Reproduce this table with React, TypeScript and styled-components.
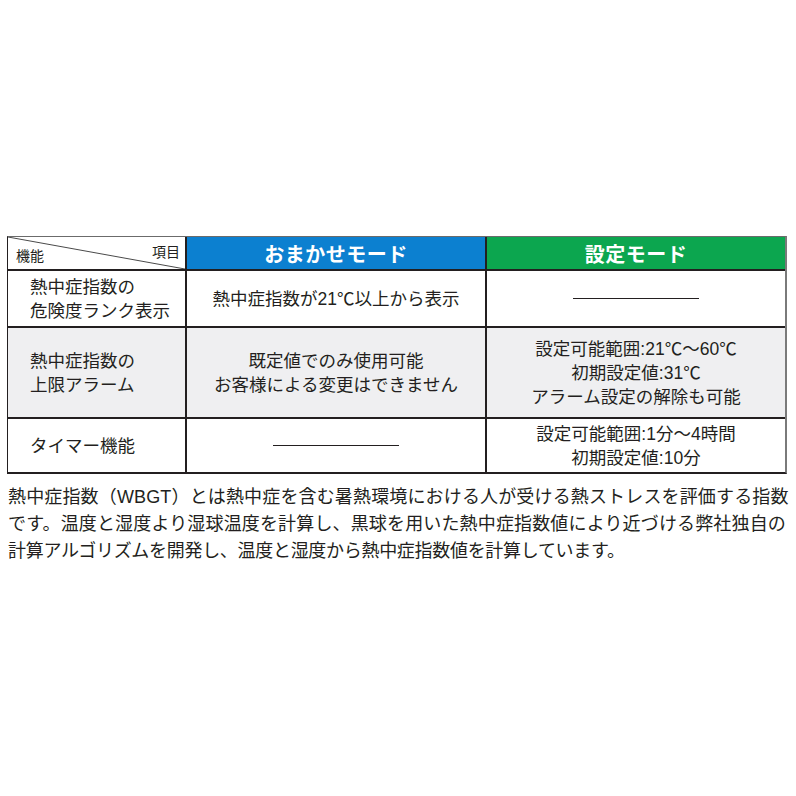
import * as React from "react";
import styled, { createGlobalStyle } from "styled-components";

const ink = "#231f20";

const GlobalStyle = createGlobalStyle`
  html, body {
    margin: 0;
    padding: 0;
    background: #ffffff;
  }
  body {
    font-family: "Liberation Sans", "Noto Sans CJK JP", sans-serif;
    color: ${ink};
  }
`;

const Page = styled.main`
  width: 796px;
  height: 796px;
  box-sizing: border-box;
  padding: 236px 0 0 7px;
`;

const Table = styled.div`
  display: grid;
  grid-template-columns: 177px 298px 298px;
  grid-template-rows: 32px 55px 89px 53px;
  gap: 2px;
  width: max-content;
  background: ${ink};
  border-top: 1px solid #6b6b6b;
  border-left: 1px solid ${ink};
  border-right: 2px solid #7a7a7a;
  border-bottom: 2px solid ${ink};
`;

const Corner = styled.div`
  position: relative;
  background: #ffffff;
  display: flex;
  justify-content: space-between;
  padding: 0 5px 0 8px;
  font-size: 14px;
`;

const Diagonal = styled.svg`
  position: absolute;
  inset: 0;
  width: 100%;
  height: 100%;
`;

const CornerLabel = styled.span<{ $align: "start" | "end" }>`
  align-self: ${(p) => (p.$align === "start" ? "flex-start" : "flex-end")};
  line-height: 20px;
  padding: ${(p) => (p.$align === "start" ? "5px 0 0" : "0 0 3px")};
`;

const HeadCell = styled.div<{ $color: string }>`
  background: ${(p) => p.$color};
  color: #ffffff;
  font-weight: bold;
  font-size: 20px;
  letter-spacing: 0.5px;
  display: flex;
  align-items: center;
  justify-content: center;
`;

const Cell = styled.div<{ $shade?: boolean; $center?: boolean }>`
  background: ${(p) => (p.$shade ? "#efeff1" : "#ffffff")};
  display: flex;
  flex-direction: column;
  justify-content: center;
  align-items: ${(p) => (p.$center ? "center" : "flex-start")};
  text-align: ${(p) => (p.$center ? "center" : "left")};
  padding: ${(p) => (p.$center ? "0" : "0 0 0 22px")};
  font-size: 17.5px;
  line-height: 24px;
  white-space: nowrap;
`;

const Dash = styled.div`
  width: 126px;
  height: 1px;
  background: ${ink};
`;

const Note = styled.p`
  margin: 10px 0 0 1px;
  font-size: 18px;
  line-height: 27px;
  letter-spacing: 0.15px;
`;

const NoteLine = styled.span<{ $tight?: boolean }>`
  display: block;
  white-space: nowrap;
  letter-spacing: ${(p) => (p.$tight ? "-0.3px" : "inherit")};
`;

const rows = [
  {
    label: ["熱中症指数の", "危険度ランク表示"],
    auto: ["熱中症指数が21℃以上から表示"],
    manual: null,
  },
  {
    label: ["熱中症指数の", "上限アラーム"],
    auto: ["既定値でのみ使用可能", "お客様による変更はできません"],
    manual: ["設定可能範囲:21℃～60℃", "初期設定値:31℃", "アラーム設定の解除も可能"],
    shade: true,
  },
  {
    label: ["タイマー機能"],
    auto: null,
    manual: ["設定可能範囲:1分～4時間", "初期設定値:10分"],
  },
];

const Lines = ({ lines }: { lines: string[] | null }) =>
  lines ? (
    <>
      {lines.map((l) => (
        <span key={l}>{l}</span>
      ))}
    </>
  ) : (
    <Dash />
  );

export default function App() {
  return (
    <>
      <GlobalStyle />
      <Page>
        <Table>
          <Corner>
            <Diagonal viewBox="0 0 177 32" preserveAspectRatio="none">
              <line x1="0" y1="0" x2="177" y2="32" stroke="#4a4a4a" strokeWidth="1" />
            </Diagonal>
            <CornerLabel $align="end">機能</CornerLabel>
            <CornerLabel $align="start">項目</CornerLabel>
          </Corner>
          <HeadCell $color="#0c80d0">おまかせモード</HeadCell>
          <HeadCell $color="#0ca64f">設定モード</HeadCell>
          {rows.map((r) => (
            <React.Fragment key={r.label.join("")}>
              <Cell $shade={r.shade}>
                <Lines lines={r.label} />
              </Cell>
              <Cell $shade={r.shade} $center>
                <Lines lines={r.auto} />
              </Cell>
              <Cell $shade={r.shade} $center>
                <Lines lines={r.manual} />
              </Cell>
            </React.Fragment>
          ))}
        </Table>
        <Note>
          <NoteLine>
            熱中症指数（WBGT）とは熱中症を含む暑熱環境における人が受ける熱ストレスを評価する指数
          </NoteLine>
          <NoteLine>
            です。温度と湿度より湿球温度を計算し、黒球を用いた熱中症指数値により近づける弊社独自の
          </NoteLine>
          <NoteLine $tight>計算アルゴリズムを開発し、温度と湿度から熱中症指数値を計算しています。</NoteLine>
        </Note>
      </Page>
    </>
  );
}
